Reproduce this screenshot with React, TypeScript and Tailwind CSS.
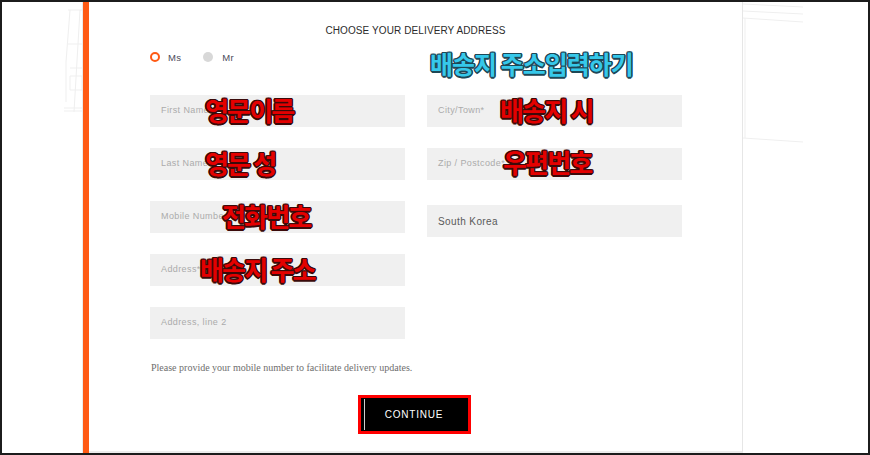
import React from "react";

const leftFields = ["First Name*", "Last Name*", "Mobile Number*", "Address*", "Address, line 2"];

const Field = ({ label, filled = false }: { label: string; filled?: boolean }) => (
  <div
    className={`h-[32px] bg-[#f0f0f0] flex items-center pl-[11px] tracking-[0.4px] ${
      filled ? "text-[#5a5a5a] text-[10px]" : "text-[#ababab] text-[9px]"
    }`}
  >
    {label}
  </div>
);

// annotation text pasted over the screenshot
const Note = ({ text, className }: { text: string; className: string }) => (
  <div
    className={`absolute whitespace-nowrap leading-none font-bold [font-family:'Noto_Sans_CJK_KR',sans-serif] ${className}`}
  >
    {text}
  </div>
);

const red =
  "text-[26px] tracking-[-1.8px] text-[#e40000] [text-shadow:1px_1px_0_#3b0a0a,-1px_-1px_0_#3b0a0a,1px_-1px_0_#3b0a0a,-1px_1px_0_#3b0a0a,0_1.5px_0_#3b0a0a,1.5px_0_0_#3b0a0a,0_-1.5px_0_#3b0a0a,-1.5px_0_0_#3b0a0a]";
const cyan =
  "text-[25px] tracking-[-1px] text-[#36c8ea] [text-shadow:1px_1px_0_#1d4756,-1px_-1px_0_#1d4756,1px_-1px_0_#1d4756,-1px_1px_0_#1d4756,0_1.5px_0_#1d4756,1.5px_0_0_#1d4756,0_-1.5px_0_#1d4756,-1.5px_0_0_#1d4756]";

export default function App() {
  return (
    <div className="relative w-[870px] h-[455px] border-2 border-[#1c1c1c] bg-white flex overflow-hidden [font-family:'Liberation_Sans',Arial,sans-serif]">
      {/* left backdrop */}
      <div className="w-[80px] h-full">
        <svg width="80" height="120" className="block">
          <g stroke="#efefef" fill="none" strokeWidth="1">
            <path d="M66 8 L80 8 M68 8 L64 60 L64 100 M78 8 L72 110 M66 42 L80 42 M68 66 L80 66 M68 74 L80 74 L80 88 L68 88 Z M62 106 L80 106 M62 109 L80 109" />
          </g>
        </svg>
      </div>

      {/* panel */}
      <div className="flex h-full border-l border-[#ebebeb]">
        <div className="w-[6px] h-full bg-[#ff5a14]" />
        <div className="w-[654px] h-[451px] border-r border-[#e6e6e6] border-b-2 border-b-[#ececec] pt-[22px]">
          <h2 className="text-center text-[10px] leading-[14px] tracking-[0.1px] text-[#2b2b2b]">
            CHOOSE YOUR DELIVERY ADDRESS
          </h2>

          <div className="pl-[61px] mt-[12px] flex items-center h-[14px] text-[9.5px] text-[#4a4a5a] tracking-[0.3px]">
            <span className="w-[10px] h-[10px] rounded-full border-2 border-[#ff5a14]" />
            <span className="ml-[8px] mt-[2px]">Ms</span>
            <span className="ml-[22px] w-[10px] h-[10px] rounded-full bg-[#d8d8d8]" />
            <span className="ml-[9px] mt-[2px]">Mr</span>
          </div>

          <div className="pl-[61px] mt-[31px] flex gap-[22px]">
            <div className="w-[255px] flex flex-col gap-[21px]">
              {leftFields.map((f) => (
                <Field key={f} label={f} />
              ))}
            </div>
            <div className="w-[255px] flex flex-col">
              <Field label="City/Town*" />
              <div className="mt-[21px]">
                <Field label="Zip / Postcode*" />
              </div>
              <div className="mt-[25px]">
                <Field label="South Korea" filled />
              </div>
            </div>
          </div>

          <p className="pl-[62px] mt-[23px] text-[10px] leading-[12px] text-[#6e6e6e] [font-family:'Liberation_Serif',serif]">
            Please provide your mobile number to facilitate delivery updates.
          </p>

          <div className="mt-[21px] flex justify-center pr-[3px]">
            <div className="border-[3px] border-[#ff0000]">
              <button className="relative w-[107px] h-[33px] bg-black text-white text-[10px] tracking-[0.8px] flex items-center justify-center">
                <span className="absolute left-[3px] top-[1px] bottom-[1px] w-px bg-[#cfcfcf]" />
                CONTINUE
              </button>
            </div>
          </div>
        </div>
      </div>

      {/* right backdrop */}
      <div className="flex-1 h-full">
        <svg width="124" height="150" className="block">
          <g stroke="#efefef" fill="none" strokeWidth="1">
            <path d="M0 2 L60 5 M0 9 L60 12 M0 16 L60 20 M2 16 L2 136 M0 136 L60 140" />
          </g>
        </svg>
      </div>

      <Note text="배송지 주소입력하기" className={`${cyan} left-[428px] top-[49px]`} />
      <Note text="영문이름" className={`${red} left-[203px] top-[95px]`} />
      <Note text="배송지 시" className={`${red} left-[498px] top-[95px]`} />
      <Note text="영문 성" className={`${red} left-[203px] top-[148px]`} />
      <Note text="우편번호" className={`${red} left-[501px] top-[147px]`} />
      <Note text="전화번호" className={`${red} left-[220px] top-[201px]`} />
      <Note text="배송지 주소" className={`${red} left-[198px] top-[254px]`} />
    </div>
  );
}
